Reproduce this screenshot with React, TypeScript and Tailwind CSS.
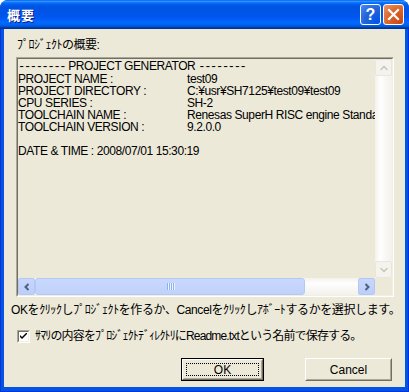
import { ChevronUp, ChevronDown } from 'lucide-react';

const font = "font-['Liberation_Sans','Noto_Sans_CJK_JP',sans-serif]";

// summary lines shown in the read-only edit box
const rows: [string, string][] = [
  ['PROJECT NAME :', 'test09'],
  ['PROJECT DIRECTORY :', 'C:¥usr¥SH7125¥test09¥test09'],
  ['CPU SERIES :', 'SH-2'],
  ['TOOLCHAIN NAME :', 'Renesas SuperH RISC engine Standard Toolchain'],
  ['TOOLCHAIN VERSION :', '9.2.0.0'],
];

function TitleBar() {
  return (
    <div className="h-[29px] shrink-0 rounded-t-[8px] flex items-center pl-[7px] pr-[5px] bg-[linear-gradient(180deg,#0058ee_0%,#3593ff_4%,#288eff_6%,#127dff_8%,#036ffc_10%,#0262ee_14%,#0057e5_20%,#0054e3_24%,#0055eb_56%,#005bf5_66%,#026afe_76%,#0062ef_86%,#0052d6_92%,#0040ab_94%,#003092_100%)]">
      <span className="text-white font-bold text-[13px] tracking-[1px] font-['Noto_Sans_CJK_JP',sans-serif] [text-shadow:1px_1px_#0a1a8a]">
        概要
      </span>
      <div className="ml-auto flex gap-[2px]">
        <div className="w-[21px] h-[21px] rounded-[3px] border border-white flex items-center justify-center bg-[radial-gradient(circle_at_90%_90%,#0054e9_0%,#2263d5_55%,#4282f8_90%)]">
          <span className="text-white font-bold text-[16px] leading-none font-['Liberation_Sans',sans-serif]">?</span>
        </div>
        <div className="w-[21px] h-[21px] rounded-[3px] border border-white flex items-center justify-center bg-[radial-gradient(circle_at_90%_90%,#cc4614_0%,#dc6527_55%,#e5936e_95%)]">
          <svg width="13" height="13" viewBox="0 0 13 13">
            <path d="M2 2 L11 11 M11 2 L2 11" stroke="white" strokeWidth="2.2" strokeLinecap="square" />
          </svg>
        </div>
      </div>
    </div>
  );
}

function VScroll() {
  return (
    <div className="flex flex-col h-full bg-[linear-gradient(90deg,#f3f1ec,#fefefe_30%,#f3f1ec)]">
      <div className="w-[17px] h-[17px] rounded-[2px] border border-[#e8e6dd] bg-[#f4f3ee] flex items-center justify-center text-[#c9c7ba]">
        <ChevronUp size={12} strokeWidth={3} />
      </div>
      <div className="flex-1" />
      <div className="w-[17px] h-[17px] rounded-[2px] border border-[#e8e6dd] bg-[#f4f3ee] flex items-center justify-center text-[#c9c7ba]">
        <ChevronDown size={12} strokeWidth={3} />
      </div>
    </div>
  );
}

function ArrowBtn({ dir }: { dir: 'l' | 'r' }) {
  return (
    <div className="w-[17px] h-[17px] shrink-0 rounded-[2px] border border-[#b4c8f6] bg-[linear-gradient(180deg,#c8d6fb,#bccefa)] flex items-center justify-center">
      <svg width="8" height="8" viewBox="0 0 8 8">
        <path d={dir === 'l' ? 'M5.5 1 L2.5 4 L5.5 7' : 'M2.5 1 L5.5 4 L2.5 7'} stroke="#4d6185" strokeWidth="2" fill="none" />
      </svg>
    </div>
  );
}

function HScroll() {
  return (
    <div className="flex h-[17px] bg-[linear-gradient(180deg,#f3f1ec,#fefefe_30%,#f3f1ec)]">
      <ArrowBtn dir="l" />
      <div className="w-[270px] shrink-0 rounded-[3px] border border-[#b4c8f6] bg-[linear-gradient(180deg,#c9d8fc,#c0d2fb)] flex items-center justify-center gap-[1px]">
        {[0, 1, 2, 3].map((i) => (
          <div key={i} className="w-[1px] h-[7px] bg-[#8cb0f8] shadow-[1px_0_#eef4fe]" />
        ))}
      </div>
      <div className="flex-1" />
      <ArrowBtn dir="r" />
    </div>
  );
}

function SummaryBox() {
  const dash = "font-['Liberation_Mono',monospace] tracking-[-1.3px]";
  return (
    <div className="ml-[12px] mt-[5px] w-[378px] h-[240px] border-t border-l border-[#aca899] border-r border-b border-r-white border-b-white">
      <div className="h-full border-t border-l border-[#716f64] border-r border-b border-r-[#f1efe2] border-b-[#f1efe2] grid grid-cols-[1fr_17px] grid-rows-[1fr_17px]">
        <div className="overflow-hidden text-[12px] leading-[12px] tracking-[-0.4px] text-black whitespace-nowrap pt-[1px]">
          <div>
            <span className={dash}>--------</span> PROJECT GENERATOR{' '}
            <span className={dash}>--------</span>
          </div>
          {rows.map(([k, v]) => (
            <div key={k} className="flex">
              <span className="w-[169px] shrink-0">{k}</span>
              <span>{v}</span>
            </div>
          ))}
          <div>&nbsp;</div>
          <div>DATE &amp; TIME : 2008/07/01 15:30:19</div>
        </div>
        <div className="row-span-1">
          <VScroll />
        </div>
        <HScroll />
        <div className="bg-[#ece9d8]" />
      </div>
    </div>
  );
}

function ClassicButton({ label, isDefault }: { label: string; isDefault?: boolean }) {
  return (
    <div className={isDefault ? 'border border-black' : ''}>
      <div className={`${isDefault ? 'w-[81px] h-[21px]' : 'w-[87px] h-[23px]'} border border-t-white border-l-white border-r-[#716f64] border-b-[#716f64] bg-[#ece9d8]`}>
        <div className="h-full border border-t-[#ece9d8] border-l-[#ece9d8] border-r-[#aca899] border-b-[#aca899] flex items-center justify-center">
          {isDefault ? (
            <div className="w-[calc(100%-4px)] h-[calc(100%-4px)] border border-dotted border-black flex items-center justify-center text-[12px]">
              {label}
            </div>
          ) : (
            <span className="text-[12px]">{label}</span>
          )}
        </div>
      </div>
    </div>
  );
}

export default function App() {
  return (
    <div className={`w-[409px] h-[392px] bg-white ${font} text-black`}>
      <div className="w-full h-full flex flex-col rounded-t-[8px] bg-[#0055e5]">
        <TitleBar />
        <div className="flex-1 px-[3px] pb-[4px] flex border-l border-r border-b border-[#0831d9]">
          <div className="flex-1 bg-[#ece9d8] flex flex-col">
            <div className="pl-[13px] pt-[9px] text-[12px] leading-[14px] tracking-[-0.5px]">ﾌﾟﾛｼﾞｪｸﾄの概要:</div>
            <SummaryBox />
            <div className="pl-[7px] mt-[6px] text-[12px] leading-[14px] tracking-[-0.4px] whitespace-nowrap">
              OKをｸﾘｯｸしﾌﾟﾛｼﾞｪｸﾄを作るか、Cancelをｸﾘｯｸしｱﾎﾞｰﾄするかを選択します。
            </div>
            <div className="flex items-center mt-[12px] pl-[13px] gap-[5px]">
              <div className="w-[13px] h-[13px] border border-t-[#aca899] border-l-[#aca899] border-r-white border-b-white">
                <div className="h-full border border-t-[#716f64] border-l-[#716f64] border-r-[#f1efe2] border-b-[#f1efe2] bg-white flex items-center justify-center">
                  <svg width="7" height="7" viewBox="0 0 7 7">
                    <path d="M0 2 L0 4 L2 6 L7 1 L7 -1 L2 4 Z" fill="black" />
                  </svg>
                </div>
              </div>
              <span className="text-[12px] leading-[14px] tracking-[-0.85px] whitespace-nowrap">
                ｻﾏﾘの内容をﾌﾟﾛｼﾞｪｸﾄﾃﾞｨﾚｸﾄﾘにReadme.txtという名前で保存する。
              </span>
            </div>
            <div className="flex mt-[15px] pl-[177px] gap-[41px]">
              <ClassicButton label="OK" isDefault />
              <ClassicButton label="Cancel" />
            </div>
          </div>
        </div>
      </div>
    </div>
  );
}
